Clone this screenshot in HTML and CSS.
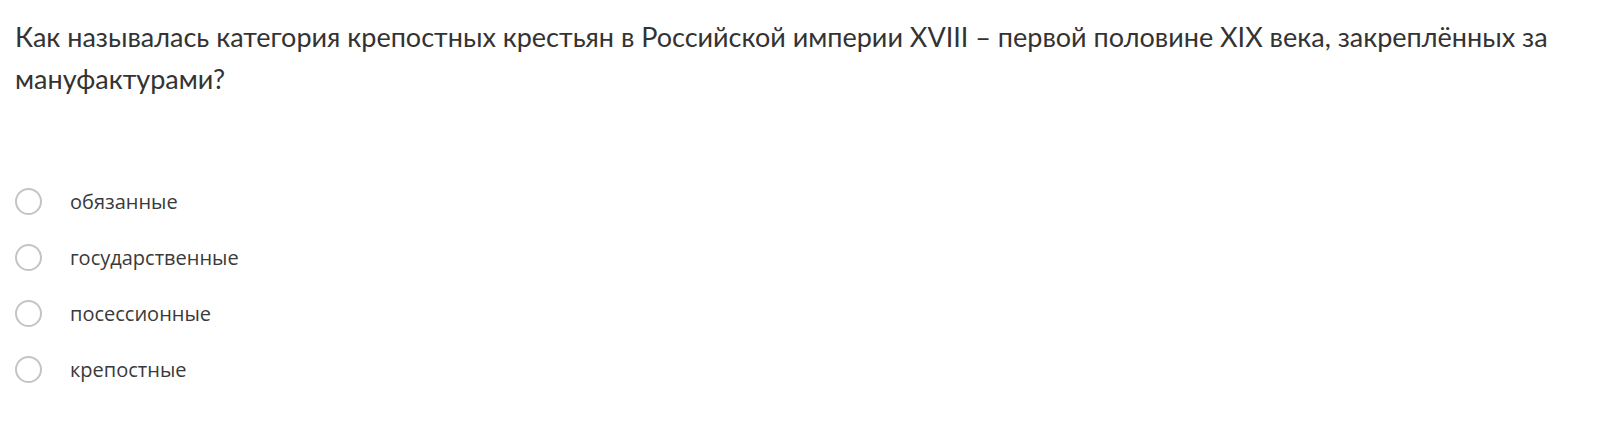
FILE: index.html
```html
<!DOCTYPE html>
<html lang="ru">
<head>
<meta charset="utf-8">
<link rel="stylesheet" href="styles.css">
</head>
<body>
<div class="quiz">
  <div class="question">Как называлась категория крепостных крестьян в Российской империи XVIII – первой половине XIX века, закреплённых за мануфактурами?</div>
  <div class="options">
    <label class="option"><span class="radio"></span><span class="text">обязанные</span></label>
    <label class="option"><span class="radio"></span><span class="text">государственные</span></label>
    <label class="option"><span class="radio"></span><span class="text">посессионные</span></label>
    <label class="option"><span class="radio"></span><span class="text">крепостные</span></label>
  </div>
</div>
</body>
</html>
```
FILE: styles.css
```css
html, body { margin: 0; padding: 0; background: #fff; }
.quiz { padding: 16px 15px 0 15px; }
.question {
  font-family: Lato, "Noto Sans", sans-serif;
  font-size: 27px;
  line-height: 42px;
  color: #333;
  max-width: 1540px;
}
.options { margin-top: 87px; display: flex; flex-direction: column; gap: 28px; }
.option { display: flex; align-items: center; height: 28px; }
.radio {
  width: 27px; height: 27px;
  border: 2px solid #c4c4c4;
  border-radius: 50%;
  box-sizing: border-box;
  flex: none;
}
.text {
  margin-left: 28px;
  font-family: "Open Sans", "Noto Sans", sans-serif;
  font-size: 20px;
  color: #3a3a3a;
}
```
